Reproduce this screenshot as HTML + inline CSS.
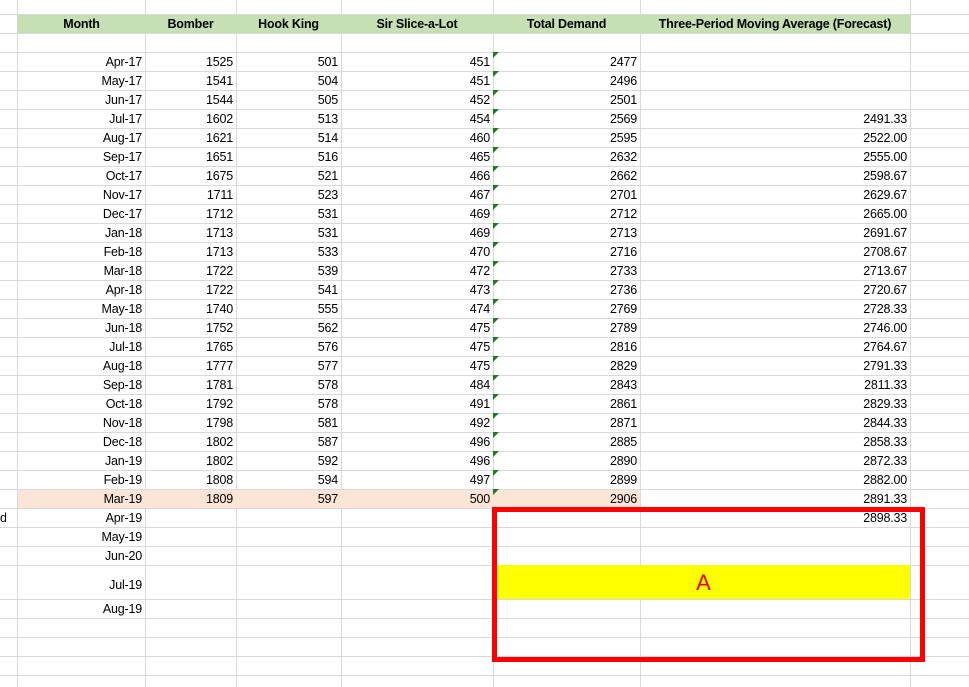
<!DOCTYPE html><html><head><style>
body{margin:0;width:969px;height:687px;overflow:hidden;background:#fff;font-family:"Liberation Sans",sans-serif;font-size:12.5px;color:#000;position:relative}
.v{position:absolute;top:0;height:687px;width:1px;background:#d9d9d9}
.h{position:absolute;left:0;width:969px;height:1px;background:#d9d9d9}
.c{position:absolute;height:19px;line-height:20px;text-align:right;white-space:nowrap;letter-spacing:-0.2px}
.t{position:absolute;width:0;height:0;border-top:6px solid #1e7b1e;border-right:6px solid transparent}
</style></head><body>
<div id="g"></div>
<div style="position:absolute;left:18px;top:15px;width:892px;height:18px;background:#c6e0b4"></div>
<div style="position:absolute;left:18px;top:490px;width:622px;height:18px;background:#fce4d6"></div>
<div style="position:absolute;left:497px;top:565px;width:413px;height:34px;background:#ffff00"></div>
<div id="g2"></div>
<script>
var xs=[17,145,236,341,493,640,910];
var ys=[14,33,52];for(var i=0;i<25;i++)ys.push(71+19*i);
ys=ys.concat([527,546,565,599,618,637,656,675]);
var h='';xs.forEach(function(x){h+='<div class="v" style="left:'+x+'px"></div>'});
ys.forEach(function(y){h+='<div class="h" style="top:'+y+'px"></div>'});
document.getElementById('g').innerHTML=h;h='';
var hd=[['Month',18,145],['Bomber',145,236],['Hook King',236,341],['Sir Slice-a-Lot',341,493],['Total Demand',493,640],['Three-Period Moving Average (Forecast)',640,910]];
hd.forEach(function(a){h+='<div class="c" style="top:14px;left:'+a[1]+'px;width:'+(a[2]-a[1])+'px;text-align:center;font-weight:bold">'+a[0]+'</div>'});
var d=[["Apr-17",1525,501,451,2477,""],["May-17",1541,504,451,2496,""],["Jun-17",1544,505,452,2501,""],["Jul-17",1602,513,454,2569,"2491.33"],["Aug-17",1621,514,460,2595,"2522.00"],["Sep-17",1651,516,465,2632,"2555.00"],["Oct-17",1675,521,466,2662,"2598.67"],["Nov-17",1711,523,467,2701,"2629.67"],["Dec-17",1712,531,469,2712,"2665.00"],["Jan-18",1713,531,469,2713,"2691.67"],["Feb-18",1713,533,470,2716,"2708.67"],["Mar-18",1722,539,472,2733,"2713.67"],["Apr-18",1722,541,473,2736,"2720.67"],["May-18",1740,555,474,2769,"2728.33"],["Jun-18",1752,562,475,2789,"2746.00"],["Jul-18",1765,576,475,2816,"2764.67"],["Aug-18",1777,577,475,2829,"2791.33"],["Sep-18",1781,578,484,2843,"2811.33"],["Oct-18",1792,578,491,2861,"2829.33"],["Nov-18",1798,581,492,2871,"2844.33"],["Dec-18",1802,587,496,2885,"2858.33"],["Jan-19",1802,592,496,2890,"2872.33"],["Feb-19",1808,594,497,2899,"2882.00"],["Mar-19",1809,597,500,2906,"2891.33"]];
d.forEach(function(r,i){var y=52+19*i;for(var j=0;j<6;j++){h+='<div class="c" style="top:'+y+'px;left:'+xs[j]+'px;width:'+(xs[j+1]-xs[j]-3)+'px">'+r[j]+'</div>'}
h+='<div class="t" style="left:493px;top:'+y+'px"></div>'});
[["Apr-19",508],["May-19",527],["Jun-20",546],["Jul-19",575],["Aug-19",599]].forEach(function(a){h+='<div class="c" style="top:'+a[1]+'px;left:17px;width:125px">'+a[0]+'</div>'});
h+='<div class="c" style="top:508px;left:640px;width:267px">2898.33</div>';
h+='<div class="c" style="top:508px;left:0;width:6px;text-align:left;overflow:hidden">d</div>';
document.getElementById('g2').innerHTML=h;
</script>
<div style="position:absolute;left:497px;top:565px;width:413px;height:34px;line-height:36px;text-align:center;color:#e00;font-size:22px">A</div>
<div style="position:absolute;left:492px;top:507px;width:423px;height:145px;border:5px solid #f00"></div>
</body></html>
